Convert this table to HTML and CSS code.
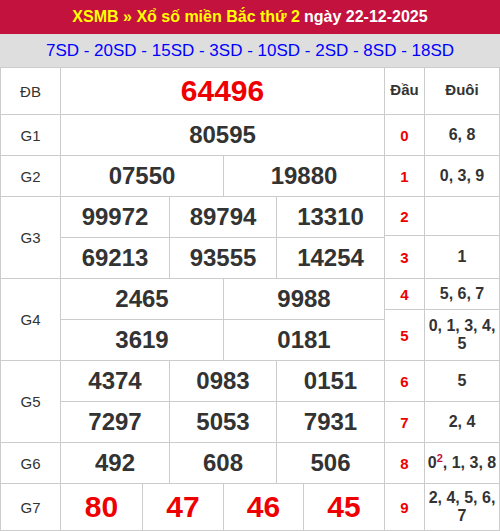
FILE: index.html
```html
<!DOCTYPE html>
<html lang="vi">
<head>
<meta charset="utf-8">
<title>XSMB</title>
<link rel="stylesheet" href="styles.css">
</head>
<body>
<div class="page">
  <div class="title"><span class="hl">XSMB » Xổ số miền Bắc thứ 2</span> ngày 22-12-2025</div>
  <div class="codes">7SD - 20SD - 15SD - 3SD - 10SD - 2SD - 8SD - 18SD</div>
  <div class="board">
    <div class="prizes">
      <div class="lbl">ĐB</div>
      <div class="nums c1"><div class="n special">64496</div></div>
      <div class="lbl">G1</div>
      <div class="nums c1"><div class="n">80595</div></div>
      <div class="lbl">G2</div>
      <div class="nums c2"><div class="n">07550</div><div class="n">19880</div></div>
      <div class="lbl span2">G3</div>
      <div class="nums c3"><div class="n">99972</div><div class="n">89794</div><div class="n">13310</div></div>
      <div class="nums c3"><div class="n">69213</div><div class="n">93555</div><div class="n">14254</div></div>
      <div class="lbl span2">G4</div>
      <div class="nums c2"><div class="n">2465</div><div class="n">9988</div></div>
      <div class="nums c2"><div class="n">3619</div><div class="n">0181</div></div>
      <div class="lbl span2">G5</div>
      <div class="nums c3"><div class="n">4374</div><div class="n">0983</div><div class="n">0151</div></div>
      <div class="nums c3"><div class="n">7297</div><div class="n">5053</div><div class="n">7931</div></div>
      <div class="lbl">G6</div>
      <div class="nums c3"><div class="n">492</div><div class="n">608</div><div class="n">506</div></div>
      <div class="lbl">G7</div>
      <div class="nums c4"><div class="n special">80</div><div class="n special">47</div><div class="n special">46</div><div class="n special">45</div></div>
    </div>
    <div class="loto">
      <div class="head">Đầu</div><div class="head">Đuôi</div>
      <div class="d">0</div><div class="t">6, 8</div>
      <div class="d">1</div><div class="t">0, 3, 9</div>
      <div class="d">2</div><div class="t"></div>
      <div class="d">3</div><div class="t">1</div>
      <div class="d">4</div><div class="t">5, 6, 7</div>
      <div class="d">5</div><div class="t">0, 1, 3, 4, 5</div>
      <div class="d">6</div><div class="t">5</div>
      <div class="d">7</div><div class="t">2, 4</div>
      <div class="d">8</div><div class="t"><span>0<sup>2</sup>, 1, 3, 8</span></div>
      <div class="d">9</div><div class="t">2, 4, 5, 6, 7</div>
    </div>
  </div>
</div>
</body>
</html>
```
FILE: styles.css
```css
* { box-sizing: border-box; }
body {
  margin: 0;
  background: #fff;
  font-family: "Liberation Sans", Arial, sans-serif;
  color: #333;
}
.page { width: 500px; }
.title {
  height: 34px;
  background: #c4123e;
  color: #fff;
  font-weight: bold;
  font-size: 16px;
  display: flex;
  align-items: center;
  justify-content: center;
}
.title .hl { color: #ffff00; margin-right: 4px; }
.codes {
  height: 33px;
  background: #dedede;
  color: #0000ff;
  font-size: 17px;
  display: flex;
  align-items: center;
  justify-content: center;
}
.board {
  display: flex;
  gap: 1px;
  padding: 1px;
  background: #cccccc;
}
.prizes {
  display: grid;
  grid-template-columns: 59px 323px;
  grid-template-rows: 46px repeat(9, 40px) 46px;
  gap: 1px;
}
.loto {
  display: grid;
  grid-template-columns: 39px 74px;
  grid-template-rows: 46px 40px 40px 38px 42px 30px 50px 40px 40px 40px 46px;
  gap: 1px;
}
.lbl {
  background: #fff;
  display: flex;
  align-items: center;
  justify-content: center;
  font-size: 15px;
}
.span2 { grid-row: span 2; }
.nums {
  display: grid;
  gap: 1px;
}
.c1 { grid-template-columns: 323px; }
.c2 { grid-template-columns: 162px 160px; }
.c3 { grid-template-columns: 108px 106px 107px; }
.c4 { grid-template-columns: 81px 80px 79px 80px; }
.n {
  background: #fff;
  display: flex;
  align-items: center;
  justify-content: center;
  font-weight: bold;
  font-size: 24px;
}
.n.special { color: #ee0000; font-size: 30px; }
.head, .d, .t {
  background: #fff;
  display: flex;
  align-items: center;
  justify-content: center;
  text-align: center;
  font-weight: bold;
}
.head { font-size: 15px; padding-bottom: 4px; }
.d { color: #ee0000; font-size: 15px; }
.t { font-size: 16px; line-height: 18px; padding: 0 2px; }
.t sup {
  color: #c4123e;
  font-size: 11px;
  line-height: 0;
  vertical-align: 6px;
}
```
